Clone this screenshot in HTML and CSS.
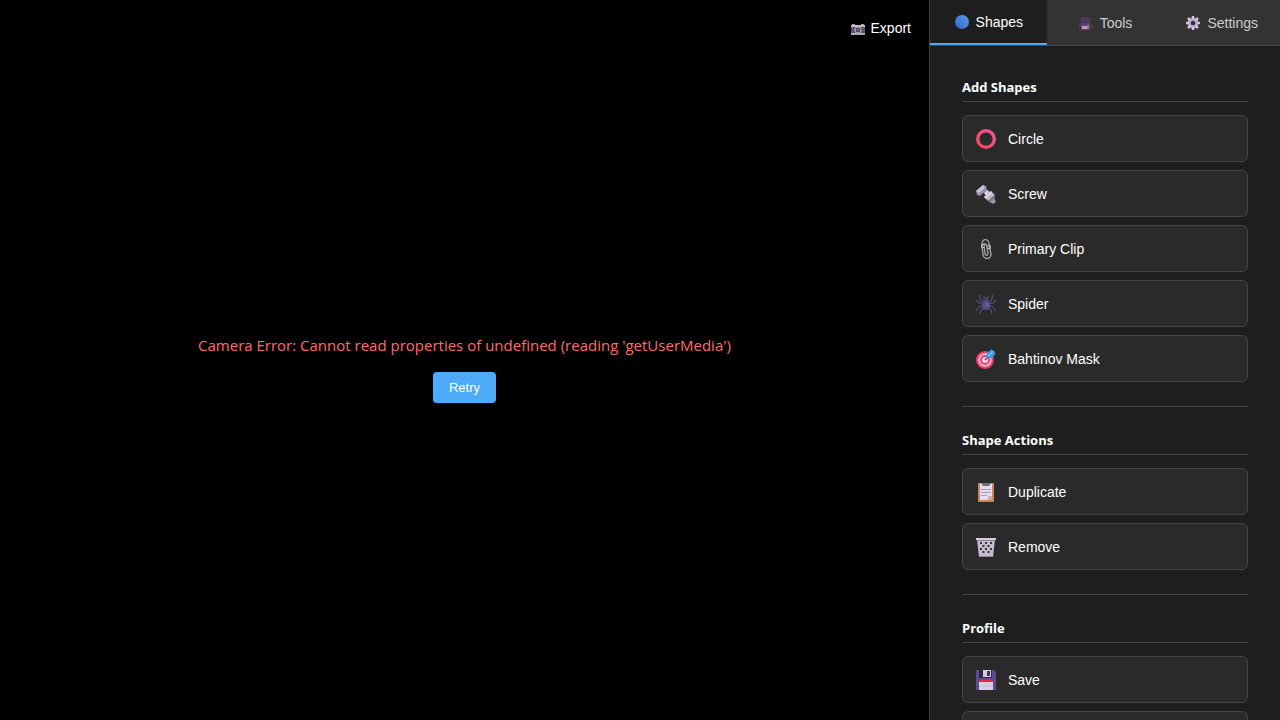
FILE: index.html
```html
<!DOCTYPE html>
<html lang="en">
<head>
<meta charset="utf-8">
<meta name="viewport" content="width=device-width, initial-scale=1">
<title>Camera Shapes</title>
<link rel="stylesheet" href="styles.css">
</head>
<body>
<div class="app">
  <main class="viewer">
    <button class="export" type="button">
      <svg class="icon-small" viewBox="0 0 14 14" aria-hidden="true">
        <path d="M0 4h1V3h3v1h6V3h3v1h1v10H0z" fill="#a9a1b3"/>
        <path d="M0 4h14v2H0z" fill="#c6bdd0"/>
        <path d="M0 6h14v6H0z" fill="#5d5567"/>
        <path d="M0 12h14v1H0z" fill="#b5adbf"/>
        <circle cx="7" cy="9" r="3.600" fill="#a79fb2"/>
        <circle cx="7" cy="9" r="2.300" fill="#463e4f"/>
        <circle cx="7" cy="9" r="1" fill="#877e92"/>
      </svg>
      <span>Export</span>
    </button>
    <div class="camera-error" role="alert">
      <p class="error-text">Camera Error: Cannot read properties of undefined (reading 'getUserMedia')</p>
      <button class="retry" type="button">Retry</button>
    </div>
  </main>

  <aside class="sidebar">
    <nav class="tabs">
      <button class="tab tab-active" type="button">
        <svg class="icon-small" viewBox="0 0 14 14" aria-hidden="true">
          <defs><linearGradient id="blue" x1="1" y1="0" x2="0" y2="1"><stop offset="0" stop-color="#4fa5ec"/><stop offset="1" stop-color="#405cc5"/></linearGradient></defs>
          <circle cx="7" cy="7" r="7" fill="url(#blue)"/>
        </svg>
        <span>Shapes</span>
      </button>
      <button class="tab" type="button">
        <svg class="icon-small" viewBox="0 0 14 14" aria-hidden="true">
          <circle cx="4" cy="4" r="2.800" fill="#513d60"/><circle cx="9" cy="4" r="2.800" fill="#513d60"/>
          <circle cx="4" cy="4" r=".8" fill="#2d2535"/><circle cx="9" cy="4" r=".8" fill="#2d2535"/>
          <path d="M2 7h9v7H2z" fill="#5a4467"/>
          <path d="M0 8h2v4H0zM11 10l3-1v4l-3-1z" fill="#4d3a59"/>
          <path d="M3 10h5v3H3z" fill="#b49db8"/><path d="M8 9h2v4H8z" fill="#b5647f"/>
        </svg>
        <span>Tools</span>
      </button>
      <button class="tab" type="button">
        <svg class="icon-small" viewBox="0 0 14 14" aria-hidden="true">
          <circle cx="7" cy="7" r="3.800" fill="none" stroke="#b9acc9" stroke-width="3"/>
          <path d="M7 0v3M7 11v3M0 7h3M11 7h3M2 2l2.200 2.200M9.800 9.800L12 12M12 2L9.800 4.200M4.200 9.800L2 12" stroke="#cfc4dc" stroke-width="2.500"/>
        </svg>
        <span>Settings</span>
      </button>
    </nav>

    <div class="panel">
      <section class="section">
        <h3 class="section-title">Add Shapes</h3>
        <div class="actions">
          <button class="action" type="button">
            <svg class="icon" viewBox="0 0 22 22" aria-hidden="true">
              <defs><linearGradient id="ring" x1="1" y1="0" x2="0" y2="1"><stop offset="0" stop-color="#f4549c"/><stop offset="1" stop-color="#f64752"/></linearGradient></defs>
              <circle cx="11" cy="11" r="8.300" fill="none" stroke="url(#ring)" stroke-width="3.400"/>
            </svg>
            <span>Circle</span>
          </button>
          <button class="action" type="button">
            <svg class="icon" viewBox="0 0 22 22" aria-hidden="true">
              <path d="M9 10l4-3 6 6-5 5z" fill="#9a8ca7"/>
              <path d="M1 8l7-6 3 1 1 4-7 6-3-1z" fill="#9b8da7"/>
              <path d="M1 8l7-6 2 3-6 5z" fill="#cdc3d7"/>
              <path d="M9 10l3-3 2 2-3 3z" fill="#ddd4e4"/>
              <path d="M9 14l7-6 4 4-7 6z" fill="#beb2c8"/>
              <path d="M9 14l7-6 1 2-6 6z" fill="#ddd4e4"/>
              <path d="M13 18l7-6v3l-5 5z" fill="#7b6d87"/>
              <path d="M15 19l4-4 2 4-3 2z" fill="#9d8ea9"/>
            </svg>
            <span>Screw</span>
          </button>
          <button class="action" type="button">
            <svg class="icon" viewBox="0 0 22 22" aria-hidden="true">
              <path d="M7 9V7c-1-7 7-7 7-1l2 10c0 6-8 6-8 0l-1-7c0-4 5-4 5 0l1 6c0 3-3 3-3 0L9 9" fill="none" stroke="#aaa5ab" stroke-width="1.300"/>
              <circle cx="8" cy="8" r="2" fill="#d5cdd6"/><circle cx="14" cy="9" r="2" fill="#d5cdd6"/>
              <circle cx="8.500" cy="8" r="1.100" fill="#623640"/><circle cx="13.500" cy="9" r="1.100" fill="#623640"/>
              <path d="M6 5l2-1M13 5l2 1" stroke="#8b7077"/>
            </svg>
            <span>Primary Clip</span>
          </button>
          <button class="action" type="button">
            <svg class="icon" viewBox="0 0 22 22" aria-hidden="true">
              <path d="M10 10L6 8 4 2M9 11l-5-1-3-3M9 13l-5 1-3 4M10 14l-4 3-1 4M12 10l4-2 2-6M13 11l5-1 3-3M13 13l5 1 3 4M12 14l4 3 1 4" fill="none" stroke="#5a4d7c" stroke-width="1.200"/>
              <circle cx="11" cy="7" r="3" fill="#4b4073"/>
              <ellipse cx="11" cy="12.500" rx="4.500" ry="4.500" fill="#554983"/>
              <ellipse cx="12" cy="11.500" rx="2" ry="2.500" fill="#6c5d99"/>
              <path d="M9 5V3M13 5V3" stroke="#5c4f82"/>
            </svg>
            <span>Spider</span>
          </button>
          <button class="action" type="button">
            <svg class="icon" viewBox="0 0 22 22" aria-hidden="true">
              <circle cx="10" cy="12" r="9" fill="#e83e70"/><circle cx="10" cy="12" r="6.700" fill="#e9bfd2"/>
              <circle cx="10" cy="12" r="5" fill="#e4426f"/><circle cx="10" cy="12" r="3" fill="#edd0dd"/>
              <path d="M10 12l6-6" stroke="#2567a8" stroke-width="1.500"/>
              <path d="M12 9V5l5-4 1 3 3 1-4 5h-4z" fill="#3b9de9"/>
              <path d="M13 8l6-5" stroke="#75c4fa" stroke-width="1.200"/>
            </svg>
            <span>Bahtinov Mask</span>
          </button>
        </div>
      </section>

      <section class="section">
        <h3 class="section-title">Shape Actions</h3>
        <div class="actions">
          <button class="action" type="button">
            <svg class="icon" viewBox="0 0 22 22" aria-hidden="true">
              <path d="M3 2h16v19H3z" fill="#d08360"/><path d="M5 3h12v12l-4 4H5z" fill="#e5dcec"/>
              <path d="M17 15v4h-4z" fill="#e8a356"/><path d="M13 15h4l-4 4z" fill="#c3b5ce"/>
              <path d="M7 2h8v2l-1 1H8L7 4z" fill="#76697f"/>
              <path d="M6 8.500h10M6 11.500h10M6 14.500h6" stroke="#a99cb6"/>
            </svg>
            <span>Duplicate</span>
          </button>
          <button class="action" type="button">
            <svg class="icon" viewBox="0 0 22 22" aria-hidden="true">
              <path d="M2 3h18l-2 18H4z" fill="#c5bccf"/>
              <path d="M1 2h20v2H1z" fill="#d5ccde"/><path d="M3 4h16v1H3z" fill="#8d8297"/>
              <path d="M6 6v2M11 6v2M16 6v2M8.500 9v2M13.500 9v2M6 12v2M11 12v2M16 12v2M8.500 15v2M13.500 15v2" stroke="#37313e" stroke-width="2"/>
              <path d="M4 20h14v1H4z" fill="#91869b"/>
            </svg>
            <span>Remove</span>
          </button>
        </div>
      </section>

      <section class="section">
        <h3 class="section-title">Profile</h3>
        <div class="actions">
          <button class="action" type="button">
            <svg class="icon" viewBox="0 0 22 22" aria-hidden="true">
              <path d="M1 1h18l2 2v18H1z" fill="#5b4b91"/>
              <path d="M4 1h13v8H4z" fill="#30264b"/><path d="M8 1h8v7H8z" fill="#d7cde3"/>
              <path d="M12 2h3v5h-3z" fill="#42355e"/>
              <path d="M4 11h14v10H4z" fill="#d9cce5"/><path d="M4 11h14v2H4z" fill="#e42744"/>
              <path d="M4 17h14" stroke="#c9badb"/>
            </svg>
            <span>Save</span>
          </button>
          <button class="action" type="button">
            <svg class="icon" viewBox="0 0 22 22" aria-hidden="true">
              <path d="M1 5h7l2 2h11v13H1z" fill="#e6b14e"/>
            </svg>
            <span>Load</span>
          </button>
        </div>
      </section>
    </div>
  </aside>
</div>
</body>
</html>
```
FILE: styles.css
```css
* {
  box-sizing: border-box;
}

body {
  margin: 0;
  background: #000;
  color: #fff;
  font-family: "Open Sans", "Noto Sans", sans-serif;
}

button {
  margin: 0;
  border: 0;
  font-family: "Liberation Sans", Arial, sans-serif;
  cursor: pointer;
}

.app {
  display: flex;
  height: 100vh;
}

.viewer {
  position: relative;
  flex: 1;
  min-width: 0;
  display: flex;
  align-items: center;
  justify-content: center;
  background: #000;
}

.export {
  position: absolute;
  top: 12px;
  right: 10px;
  display: flex;
  align-items: center;
  gap: 6px;
  padding: 8px;
  background: transparent;
  color: #fff;
  font-size: 14px;
  line-height: 16px;
}

.icon-small {
  flex: none;
  width: 14px;
  height: 14px;
}

.camera-error {
  text-align: center;
}

.error-text {
  margin: 16px 0;
  color: #ff6b6b;
  font-size: 15px;
  line-height: 22px;
}

.retry {
  padding: 8px 16px;
  border-radius: 4px;
  background: #4dabf7;
  color: #fff;
  font-size: 13px;
  line-height: 15px;
}

.sidebar {
  flex: none;
  display: flex;
  flex-direction: column;
  width: 351px;
  border-left: 1px solid #444;
  background: #1e1e1e;
}

.tabs {
  flex: none;
  display: flex;
  border-bottom: 1px solid #444;
  background: #333;
}

.tab {
  flex: 1;
  display: flex;
  align-items: center;
  justify-content: center;
  gap: 7px;
  padding: 15px 7px 14px 8px;
  background: transparent;
  color: #ccc;
  font-size: 14px;
  line-height: 16px;
}

.tab-active {
  padding-top: 14px;
  padding-bottom: 13px;
  border-bottom: 2px solid #4dabf7;
  background: #1e1e1e;
  color: #fff;
}

.panel {
  flex: 1;
  min-height: 0;
  padding: 32px;
  overflow-y: auto;
  scrollbar-width: none;
}

.section + .section {
  margin-top: 24px;
  padding-top: 24px;
  border-top: 1px solid #444;
}

.section-title {
  margin: 0 0 13px;
  padding-bottom: 4px;
  border-bottom: 1px solid #444;
  font-size: 13px;
  font-weight: 700;
  line-height: 19px;
}

.actions {
  display: flex;
  flex-direction: column;
  gap: 8px;
}

.action {
  display: flex;
  align-items: center;
  gap: 11px;
  padding: 12px 12px 11px;
  border: 1px solid #444;
  border-radius: 6px;
  background: #2a2a2a;
  color: #fff;
  font-size: 14px;
  line-height: 22px;
  text-align: left;
}

.icon {
  flex: none;
  width: 22px;
  height: 22px;
}
```
